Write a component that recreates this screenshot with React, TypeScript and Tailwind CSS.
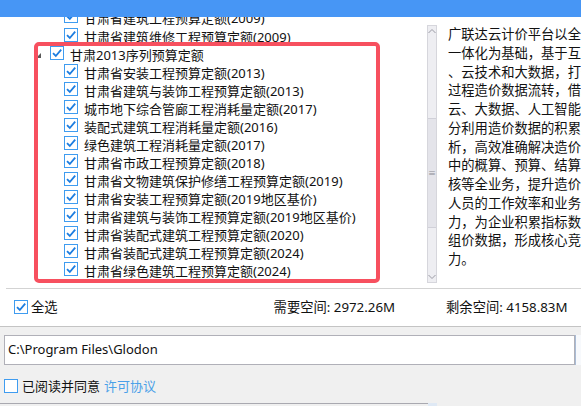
const font = '"Noto Sans", "Noto Sans CJK SC", sans-serif'

const group = {
  title: '甘肃2013序列预算定额',
  items: [
    '甘肃省安装工程预算定额(2013)',
    '甘肃省建筑与装饰工程预算定额(2013)',
    '城市地下综合管廊工程消耗量定额(2017)',
    '装配式建筑工程消耗量定额(2016)',
    '绿色建筑工程消耗量定额(2017)',
    '甘肃省市政工程预算定额(2018)',
    '甘肃省文物建筑保护修缮工程预算定额(2019)',
    '甘肃省安装工程预算定额(2019地区基价)',
    '甘肃省建筑与装饰工程预算定额(2019地区基价)',
    '甘肃省装配式建筑工程预算定额(2020)',
    '甘肃省装配式建筑工程预算定额(2024)',
    '甘肃省绿色建筑工程预算定额(2024)'
  ]
}

const intro = [
  '广联达云计价平台以全过程',
  '一体化为基础，基于互联网',
  '、云技术和大数据，打通全',
  '过程造价数据流转，借助于',
  '云、大数据、人工智能等充',
  '分利用造价数据的积累和分',
  '析，高效准确解决造价行业',
  '中的概算、预算、结算、审',
  '核等全业务，提升造价从业',
  '人员的工作效率和业务能',
  '力，为企业积累指标数据和',
  '组价数据，形成核心竞争',
  '力。'
]

function Check({ checked = true }: { checked?: boolean }) {
  return (
    <span className="w-[14px] h-[14px] shrink-0 border border-[#3f9cf0] bg-white flex items-center justify-center -translate-y-px">
      {checked && (
        <svg width="12" height="12" viewBox="0 0 12 12">
          <path d="M2 6.2 L4.8 9 L10.2 2.6" fill="none" stroke="#1c7de0" strokeWidth="1.8" />
        </svg>
      )}
    </span>
  )
}

function Row({ label, indent }: { label: string; indent: number }) {
  return (
    <div className="h-[18px] flex items-center gap-[6px] whitespace-nowrap" style={{ paddingLeft: indent }}>
      <Check />
      <span className="text-[13px] text-[#111] leading-none translate-y-px">{label}</span>
    </div>
  )
}

export default function App() {
  return (
    <div className="w-[581px] h-[406px] overflow-hidden bg-[#f0f0f0] relative" style={{ fontFamily: font }}>
      <div className="h-[17px] bg-[#4796f5] relative z-10" />

      <div className="flex h-[271px] bg-white">
        <div className="w-[427px] overflow-hidden relative">
          <div className="-mt-[9px]">
            <Row label="甘肃省建筑工程预算定额(2009)" indent={64} />
            <div className="h-px" />
            <Row label="甘肃省建筑维修工程预算定额(2009)" indent={64} />
            <div className="h-[18px] flex items-center whitespace-nowrap">
              <svg width="5" height="5" viewBox="0 0 5 5" className="ml-[36px] mr-[9px] mt-[2px]">
                <path d="M5 0 L5 5 L0 5 Z" fill="#5a5a5a" />
              </svg>
              <Check />
              <span className="ml-[6px] text-[13px] text-[#111] leading-none translate-y-px">{group.title}</span>
            </div>
            {group.items.map((item) => (
              <Row key={item} label={item} indent={64} />
            ))}
          </div>
          <div className="absolute left-[34px] top-[25px] w-[346px] h-[241px] border-[4px] border-[#f7505f] rounded-[5px]" />
        </div>

        <div className="w-[10px] mt-[8px] mb-[5px] border border-[#d6d6dc] bg-[#eeeef2] flex flex-col items-center">
          <svg width="8" height="6" viewBox="0 0 8 6" className="mt-[2px]">
            <path d="M0.5 5 L4 1.5 L7.5 5" fill="none" stroke="#9a9aa4" strokeWidth="1" />
          </svg>
          <div className="mt-[84px] w-full h-[110px] bg-[#e4e4ea] border-y border-[#d0d0d8] flex items-center justify-center">
            <span className="text-[8px] leading-none text-[#8a8a94]">≡</span>
          </div>
          <div className="flex-1" />
          <svg width="8" height="6" viewBox="0 0 8 6" className="mb-[2px]">
            <path d="M0.5 1 L4 4.5 L7.5 1" fill="none" stroke="#9a9aa4" strokeWidth="1" />
          </svg>
        </div>

        <div className="ml-[11px] flex-1 overflow-hidden pt-[8px]">
          {intro.map((line, i) => (
            <div key={i} className="h-[18.75px] leading-[18.75px] text-[13.3px] text-[#111] whitespace-nowrap">
              {line}
            </div>
          ))}
        </div>
      </div>

      <div className="bg-white">
        <div className="ml-[6px] h-px bg-[#d3d3d3]" />
        <div className="h-[37px] flex items-center text-[13.3px] text-[#111] whitespace-nowrap">
          <div className="ml-[14px] flex items-center gap-[3px]">
            <Check />
            <span>全选</span>
          </div>
          <span className="ml-[216px]">需要空间: 2972.26M</span>
          <span className="ml-[51px]">剩余空间: 4158.83M</span>
        </div>
      </div>
      <div className="h-px bg-[#c4c4c4]" />

      <div className="pt-[8px] flex">
        <div className="ml-[4px] w-[571px] h-[30px] bg-white border border-[#b0b0b8] flex items-center px-[3px] text-[13px] text-[#111]">
          C:\Program Files\Glodon
        </div>
        <div className="w-[6px] h-[30px] border-l border-[#a9bcd6] bg-[#f7f9fc]" />
      </div>

      <div className="mt-[12px] ml-[4px] flex items-center gap-[4px] text-[13px] whitespace-nowrap">
        <Check checked={false} />
        <span className="text-[#111]">已阅读并同意</span>
        <span className="text-[#4aa0e8]">许可协议</span>
      </div>

      <div className="absolute left-0 top-[403px] flex">
        <div className="w-[428px] h-[3px] border-t border-[#a9a9b0]" />
        <div className="w-[9px] h-[3px] bg-[#dfe9f5]" />
      </div>
    </div>
  )
}
